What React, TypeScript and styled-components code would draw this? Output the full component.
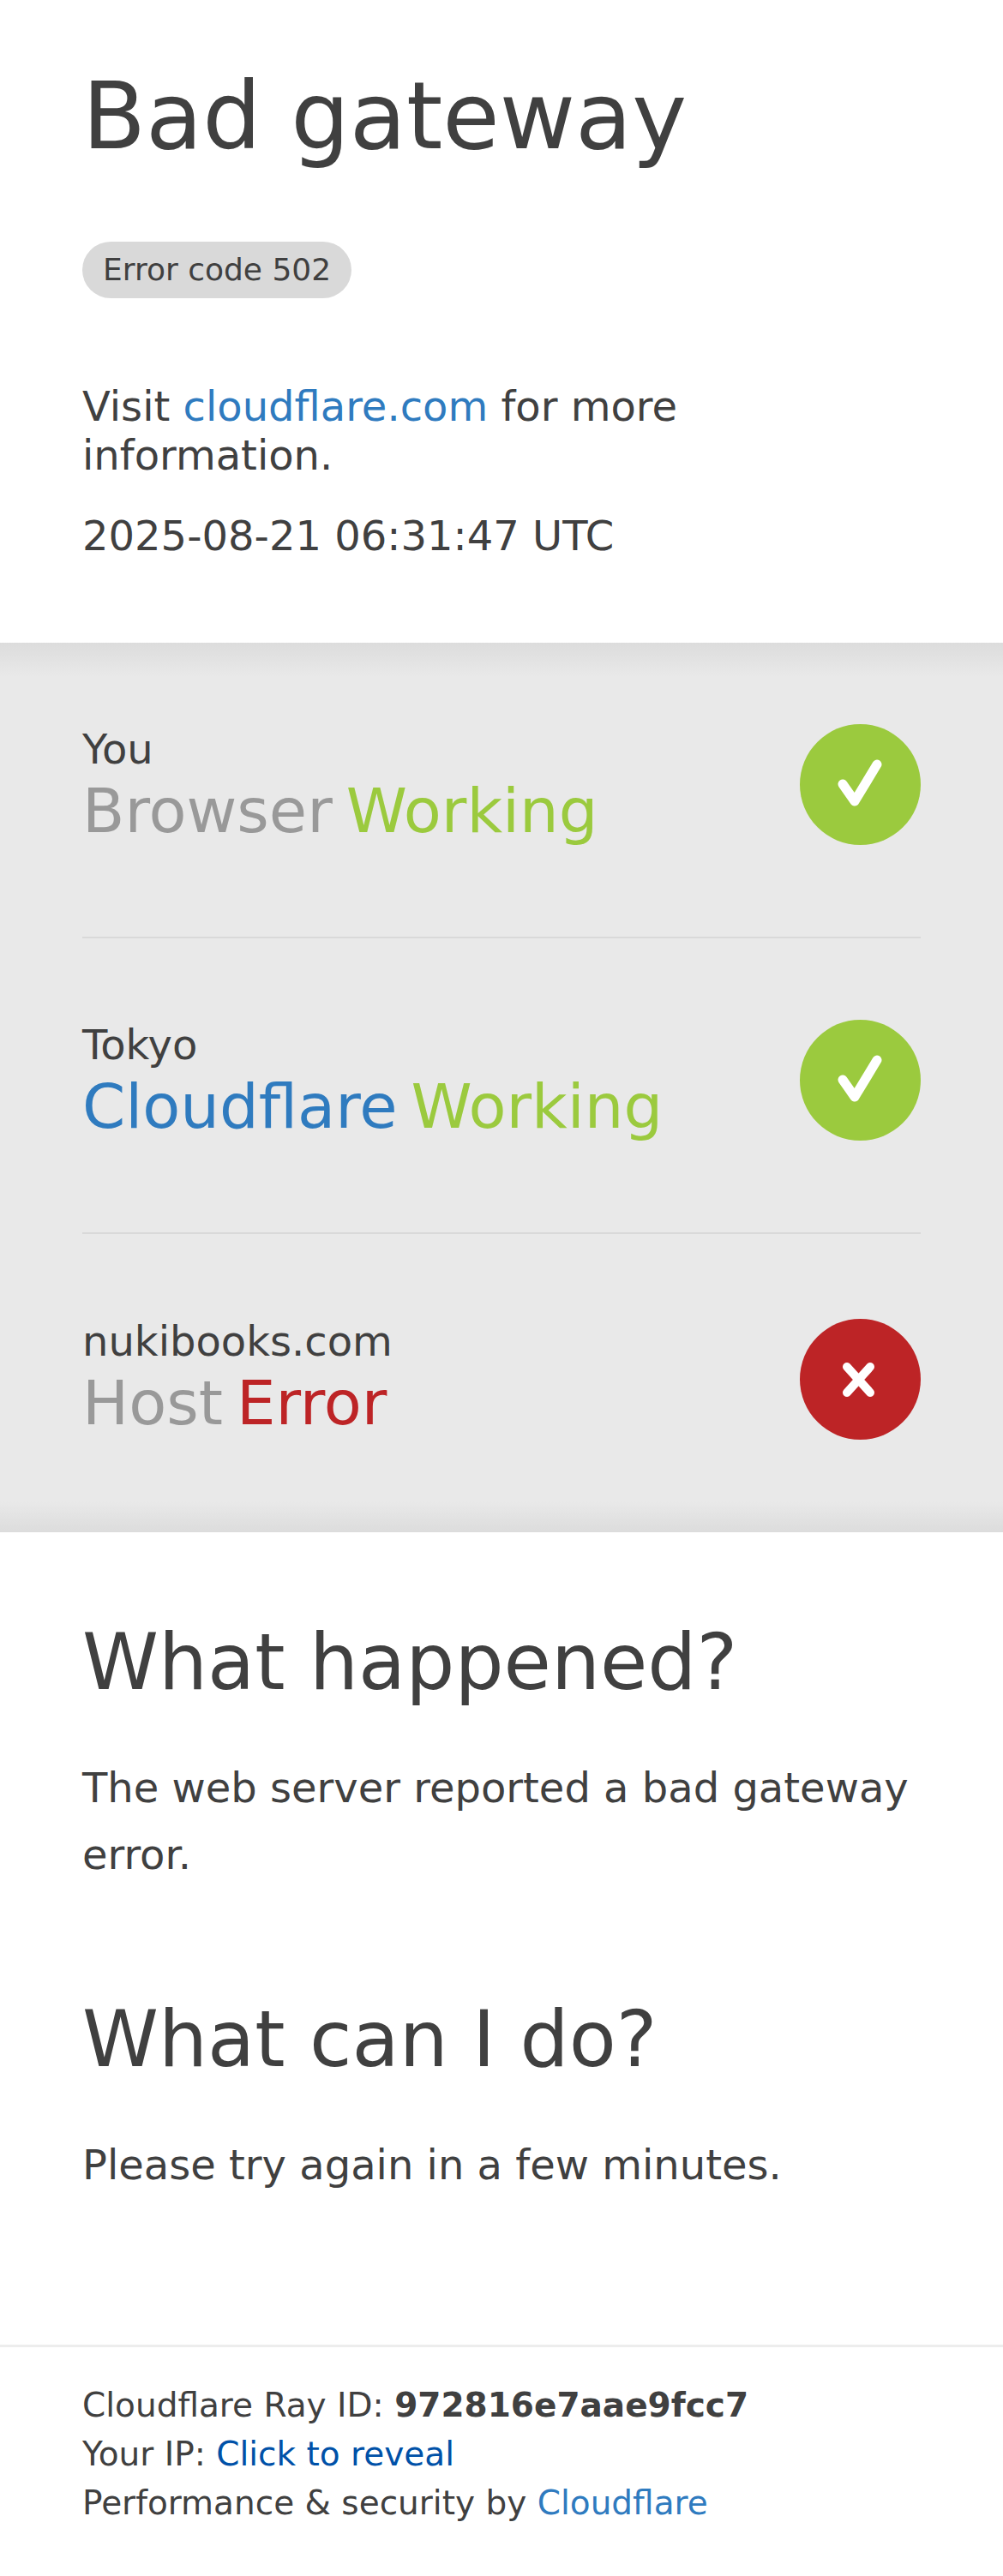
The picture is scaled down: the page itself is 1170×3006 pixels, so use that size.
import styled, { createGlobalStyle } from "styled-components";

const GlobalStyle = createGlobalStyle`
  html, body {
    margin: 0;
    padding: 0;
    background: #fff;
  }
  body {
    font-family: "DejaVu Sans", sans-serif;
    color: #404040;
  }
  * {
    box-sizing: border-box;
  }
`;

const Header = styled.header`
  height: 750px;
  padding: 68px 96px 0;
`;

const Title = styled.h1`
  margin: 0;
  font-size: 108px;
  line-height: 136px;
  font-weight: 400;
  color: #404040;
`;

const Code = styled.span`
  display: inline-block;
  margin-top: 78px;
  height: 66px;
  padding: 0 24px;
  border-radius: 33px;
  background: #d9d9d9;
  font-size: 36px;
  line-height: 66px;
`;

const Visit = styled.p`
  margin: 98px 0 0;
  width: 860px;
  font-size: 48px;
  line-height: 57px;
`;

const Stamp = styled.p`
  margin: 37px 0 0;
  font-size: 48px;
  line-height: 56px;
`;

const Link = styled.a<{ $color?: string }>`
  color: ${(props) => props.$color || "#2f7bbf"};
  text-decoration: none;
`;

const Status = styled.section`
  height: 1038px;
  padding: 0 96px;
  background: linear-gradient(to bottom, #dcdcdc 0, #e9e9e9 40px, #e9e9e9 calc(100% - 36px), #dcdcdc 100%);
`;

const Row = styled.div`
  height: 345px;
  padding-bottom: 12px;
  display: flex;
  align-items: center;
  justify-content: space-between;
  border-bottom: 2px solid #d9d9d9;

  &:last-child {
    height: 348px;
    padding-bottom: 10px;
    border-bottom: none;
  }
`;

const Labels = styled.div<{ $last?: boolean }>`
  padding-bottom: ${(props) => (props.$last ? "4px" : "0")};
`;

const Place = styled.div`
  font-size: 48px;
  line-height: 60px;
`;

const Line = styled.div`
  display: flex;
  gap: 16px;
  font-size: 72px;
  line-height: 84px;
`;

const Name = styled.span<{ $link?: boolean }>`
  color: ${(props) => (props.$link ? "#2f7bbf" : "#999")};
`;

const State = styled.span<{ $bad?: boolean }>`
  color: ${(props) => (props.$bad ? "#bd2426" : "#9bca3e")};
`;

const Icon = styled.svg`
  display: block;
  flex: none;
  width: 141px;
  height: 141px;
`;

const Body = styled.main`
  padding: 0 96px;
`;

const Heading = styled.h2<{ $top: number }>`
  margin: ${(props) => props.$top}px 0 0;
  font-size: 90px;
  line-height: 108px;
  font-weight: 400;
  color: #404040;
`;

const Text = styled.p`
  margin: 53px 0 0;
  font-size: 48px;
  line-height: 78px;
`;

const Footer = styled.footer`
  margin-top: 171px;
  padding: 39px 96px 0;
  border-top: 3px solid #ededed;
  font-size: 39px;
  line-height: 57px;
`;

const Ray = styled.strong`
  font-weight: 700;
`;

function CheckIcon() {
  return (
    <Icon viewBox="0 0 141 141">
      <circle cx="70.5" cy="70.5" r="70.5" fill="#9bca3e" />
      <path d="M50 70 L64 90 L90 47" fill="none" stroke="#fff" strokeWidth="11" strokeLinecap="round" strokeLinejoin="round" />
    </Icon>
  );
}

function CrossIcon() {
  return (
    <Icon viewBox="0 0 141 141">
      <circle cx="70.5" cy="70.5" r="70.5" fill="#bd2426" />
      <path d="M55 56 L82 86 M82 56 L55 86" fill="none" stroke="#fff" strokeWidth="10" strokeLinecap="round" />
    </Icon>
  );
}

export default function App() {
  return (
    <>
      <GlobalStyle />
      <Header>
        <Title>Bad gateway</Title>
        <Code>Error code 502</Code>
        <Visit>
          Visit <Link href="#">cloudflare.com</Link> for more information.
        </Visit>
        <Stamp>2025-08-21 06:31:47 UTC</Stamp>
      </Header>
      <Status>
        <Row>
          <Labels>
            <Place>You</Place>
            <Line>
              <Name>Browser</Name>
              <State>Working</State>
            </Line>
          </Labels>
          <CheckIcon />
        </Row>
        <Row>
          <Labels>
            <Place>Tokyo</Place>
            <Line>
              <Name $link>Cloudflare</Name>
              <State>Working</State>
            </Line>
          </Labels>
          <CheckIcon />
        </Row>
        <Row>
          <Labels $last>
            <Place>nukibooks.com</Place>
            <Line>
              <Name>Host</Name>
              <State $bad>Error</State>
            </Line>
          </Labels>
          <CrossIcon />
        </Row>
      </Status>
      <Body>
        <Heading $top={98}>What happened?</Heading>
        <Text>The web server reported a bad gateway error.</Text>
        <Heading $top={123}>What can I do?</Heading>
        <Text>Please try again in a few minutes.</Text>
      </Body>
      <Footer>
        <div>
          Cloudflare Ray ID: <Ray>972816e7aae9fcc7</Ray>
        </div>
        <div>
          Your IP: <Link href="#" $color="#0051a8">Click to reveal</Link>
        </div>
        <div>
          Performance &amp; security by <Link href="#">Cloudflare</Link>
        </div>
      </Footer>
    </>
  );
}
